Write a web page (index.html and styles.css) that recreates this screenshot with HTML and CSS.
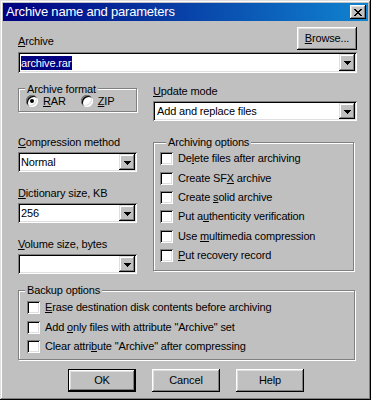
FILE: index.html
```html
<!DOCTYPE html>
<html lang="en">
<head>
<meta charset="utf-8">
<title>Archive name and parameters</title>
<link rel="stylesheet" href="styles.css">
</head>
<body>
<div class="window">
  <div class="titlebar">
    <span class="title">Archive name and parameters</span>
    <span class="close"><svg width="8" height="7" viewBox="0 0 8 7" shape-rendering="crispEdges"><path fill="#000" d="M0 0h2v1H0zM6 0h2v1H6zM1 1h2v1H1zM5 1h2v1H5zM2 2h4v1H2zM3 3h2v1H3zM2 4h4v1H2zM1 5h2v1H1zM5 5h2v1H5zM0 6h2v1H0zM6 6h2v1H6z"/></svg></span>
  </div>
  <div class="content">
    <div class="archive-head">
      <span class="label"><u>A</u>rchive</span>
      <span class="btn browse"><span><u>B</u>rowse...</span></span>
    </div>
    <div class="combo combo-archive">
      <span class="value"><span class="sel">archive.rar</span></span>
      <span class="drop"><svg width="7" height="4" viewBox="0 0 7 4" shape-rendering="crispEdges"><path fill="#000" d="M0 0h7v1H0zM1 1h5v1H1zM2 2h3v1H2zM3 3h1v1H3z"/></svg></span>
    </div>
    <div class="cols">
      <div class="col">
        <div class="group format">
          <div class="legend">Archive format</div>
          <div class="radios">
            <span class="radio-item"><span class="radio checked"></span><span><u>R</u>AR</span></span>
            <span class="radio-item"><span class="radio"></span><span><u>Z</u>IP</span></span>
          </div>
        </div>
        <div class="label lbl-first"><u>C</u>ompression method</div>
        <div class="combo">
          <span class="value">Normal</span>
          <span class="drop"><svg width="7" height="4" viewBox="0 0 7 4" shape-rendering="crispEdges"><path fill="#000" d="M0 0h7v1H0zM1 1h5v1H1zM2 2h3v1H2zM3 3h1v1H3z"/></svg></span>
        </div>
        <div class="label lbl-next"><u>D</u>ictionary size, KB</div>
        <div class="combo">
          <span class="value">256</span>
          <span class="drop"><svg width="7" height="4" viewBox="0 0 7 4" shape-rendering="crispEdges"><path fill="#000" d="M0 0h7v1H0zM1 1h5v1H1zM2 2h3v1H2zM3 3h1v1H3z"/></svg></span>
        </div>
        <div class="label lbl-next"><u>V</u>olume size, bytes</div>
        <div class="combo">
          <span class="value"></span>
          <span class="drop"><svg width="7" height="4" viewBox="0 0 7 4" shape-rendering="crispEdges"><path fill="#000" d="M0 0h7v1H0zM1 1h5v1H1zM2 2h3v1H2zM3 3h1v1H3z"/></svg></span>
        </div>
      </div>
      <div class="col">
        <div class="label lbl-update"><u>U</u>pdate mode</div>
        <div class="combo">
          <span class="value value-wide">Add and replace files</span>
          <span class="drop"><svg width="7" height="4" viewBox="0 0 7 4" shape-rendering="crispEdges"><path fill="#000" d="M0 0h7v1H0zM1 1h5v1H1zM2 2h3v1H2zM3 3h1v1H3z"/></svg></span>
        </div>
        <div class="group options">
          <div class="legend">Archiving options</div>
          <div class="check-row"><span class="cb"></span><span>De<u>l</u>ete files after archiving</span></div>
          <div class="check-row"><span class="cb"></span><span>Create SF<u>X</u> archive</span></div>
          <div class="check-row"><span class="cb"></span><span>Create <u>s</u>olid archive</span></div>
          <div class="check-row"><span class="cb"></span><span>Put a<u>u</u>thenticity verification</span></div>
          <div class="check-row"><span class="cb"></span><span>Use <u>m</u>ultimedia compression</span></div>
          <div class="check-row"><span class="cb"></span><span><u>P</u>ut recovery record</span></div>
        </div>
      </div>
    </div>
    <div class="group backup">
      <div class="legend">Backup options</div>
      <div class="check-rows">
        <div class="check-row"><span class="cb"></span><span><u>E</u>rase destination disk contents before archiving</span></div>
        <div class="check-row"><span class="cb"></span><span>Add <u>o</u>nly files with attribute "Archive" set</span></div>
        <div class="check-row"><span class="cb"></span><span>Clear attri<u>b</u>ute "Archive" after compressing</span></div>
      </div>
    </div>
    <div class="buttons">
      <span class="btn default">OK</span>
      <span class="btn">Cancel</span>
      <span class="btn">Help</span>
    </div>
  </div>
</div>
</body>
</html>
```

FILE: styles.css
```css
* {
  box-sizing: border-box;
}

html,
body {
  margin: 0;
  padding: 0;
}

body {
  width: 371px;
  height: 400px;
  overflow: hidden;
  background: #c0c0c0;
  color: #000;
  font-family: "Liberation Sans", Arial, sans-serif;
  font-size: 11px;
  letter-spacing: -0.15px;
  line-height: 13px;
}

u {
  text-decoration: underline;
  text-decoration-thickness: 1px;
}

.window {
  width: 371px;
  height: 400px;
  padding: 3px;
  background: #c0c0c0;
  box-shadow: inset -1px -1px #000, inset 1px 1px #dfdfdf, inset -2px -2px #808080, inset 2px 2px #fff;
}

.titlebar {
  height: 18px;
  display: flex;
  align-items: center;
  justify-content: space-between;
  padding: 0 2px 0 3px;
  background: linear-gradient(to right, #000080, #1084d0);
}

.title {
  color: #fff;
  font-size: 13px;
  line-height: 18px;
  letter-spacing: -0.2px;
}

.close {
  width: 16px;
  height: 14px;
  display: flex;
  align-items: center;
  justify-content: center;
  padding-right: 1px;
  background: #c0c0c0;
  box-shadow: inset -1px -1px #000, inset 1px 1px #fff, inset -2px -2px #808080, inset 2px 2px #dfdfdf;
}

.close svg,
.drop svg {
  display: block;
}

.content {
  padding: 0 11px 0 15px;
}

.archive-head {
  margin-top: 6px;
  display: flex;
  justify-content: space-between;
  align-items: flex-end;
}

.archive-head .label {
  padding-bottom: 2px;
}

.label {
  line-height: 13px;
  white-space: nowrap;
}

.btn {
  height: 23px;
  width: 68px;
  display: flex;
  align-items: center;
  justify-content: center;
  background: #c0c0c0;
  box-shadow: inset -1px -1px #000, inset 1px 1px #fff, inset -2px -2px #808080, inset 2px 2px #dfdfdf;
}

.btn.browse {
  width: 60px;
  padding-bottom: 1px;
}

.btn.default {
  border: 1px solid #000;
}

.combo {
  height: 20px;
  display: flex;
  padding: 2px;
  background: #fff;
  box-shadow: inset 1px 1px #808080, inset -1px -1px #fff, inset 2px 2px #000, inset -2px -2px #dfdfdf;
}

.combo-archive {
  height: 21px;
  margin-top: 2px;
}

.value {
  flex: 1;
  display: flex;
  align-items: center;
  padding-left: 1px;
  white-space: nowrap;
  overflow: hidden;
}

.value-wide {
  padding-left: 2px;
}

.sel {
  background: #000080;
  color: #fff;
  line-height: 14px;
  padding: 0 1px 0 0;
}

.drop {
  width: 16px;
  flex-shrink: 0;
  display: flex;
  align-items: center;
  justify-content: center;
  padding-top: 1px;
  background: #c0c0c0;
  box-shadow: inset -1px -1px #000, inset 1px 1px #dfdfdf, inset -2px -2px #808080, inset 2px 2px #fff;
}

.cols {
  display: grid;
  grid-template-columns: 119px 1fr;
  column-gap: 16px;
  align-items: start;
}

.group {
  border: 1px solid #808080;
  box-shadow: inset 1px 1px #fff, 1px 1px #fff;
}

.legend {
  display: table;
  margin: -7px 0 0 6px;
  padding: 0 2px;
  background: #c0c0c0;
  line-height: 13px;
  white-space: nowrap;
}

.format {
  margin-top: 15px;
  padding-bottom: 4px;
}

.format .legend {
  line-height: 12px;
  margin-top: -6px;
  padding-bottom: 1px;
}

.radios {
  display: flex;
  gap: 15px;
  margin-top: -1px;
  padding-left: 7px;
  line-height: 12px;
}

.radio-item {
  display: flex;
  align-items: center;
  gap: 5px;
}

.radio {
  width: 12px;
  height: 12px;
  flex-shrink: 0;
  border-radius: 50%;
  background: #fff;
  display: flex;
  align-items: center;
  justify-content: center;
  box-shadow: inset 1px 1px #808080, inset -1px -1px #fff, inset 2px 2px #000, inset -2px -2px #dfdfdf;
}

.radio.checked::after {
  content: "";
  width: 4px;
  height: 4px;
  border-radius: 50%;
  background: #000;
}

.lbl-first {
  margin-top: 24px;
}

.lbl-next {
  margin-top: 15px;
}

.lbl-first + .combo,
.lbl-next + .combo,
.lbl-update + .combo {
  margin-top: 3px;
}

.lbl-update {
  margin-top: 12px;
}

.options {
  margin-top: 21px;
  margin-right: 3px;
  padding: 0 0 4.6px 6px;
}

.check-row {
  height: 19.4px;
  display: flex;
  align-items: center;
  gap: 5px;
  white-space: nowrap;
}

.cb {
  width: 13px;
  height: 13px;
  flex-shrink: 0;
  background: #fff;
  box-shadow: inset 1px 1px #808080, inset -1px -1px #fff, inset 2px 2px #000, inset -2px -2px #dfdfdf;
}

.backup {
  margin-top: 16px;
  margin-right: 2px;
  padding: 0 0 2.5px 8px;
}

.backup .legend {
  margin-left: -2px;
}

.check-rows {
  margin-top: 1px;
}

.backup .check-row {
  height: 19.5px;
}

.buttons {
  margin-top: 9px;
  display: flex;
  gap: 16px;
  padding-left: 50px;
}
```
